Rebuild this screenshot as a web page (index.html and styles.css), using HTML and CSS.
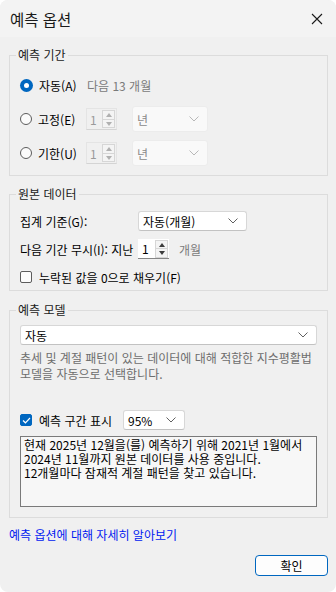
FILE: index.html
```html
<!DOCTYPE html>
<html lang="ko">
<head>
  <meta charset="UTF-8">
  <meta name="viewport" content="width=device-width, initial-scale=1.0">
  <title>예측 옵션</title>
  <link rel="stylesheet" href="styles.css">
</head>
<body>
  <div class="window">
    <div class="titlebar">
      <span class="title">예측 옵션</span>
      <svg class="close" width="12" height="12" viewBox="0 0 12 12"><path d="M1 1 L11 11 M11 1 L1 11" stroke="#1a1a1a" stroke-width="1.1" fill="none"/></svg>
    </div>

    <div class="content">
      <fieldset class="group group-period">
        <legend>예측 기간</legend>
        <div class="row">
          <span class="radio checked"></span>
          <span class="label">자동(A)</span>
          <span class="hint">다음 13 개월</span>
        </div>
        <div class="row">
          <span class="radio"></span>
          <span class="label">고정(E)</span>
          <div class="spin disabled"><span class="num">1</span><span class="arrows"><i class="up"></i><i class="down"></i></span></div>
          <div class="select disabled unit"><span>년</span><svg class="chev" width="10" height="6" viewBox="0 0 10 6"><path d="M0.5 0.5 L5 5 L9.5 0.5" stroke="#b8b8b8" fill="none"/></svg></div>
        </div>
        <div class="row">
          <span class="radio"></span>
          <span class="label">기한(U)</span>
          <div class="spin disabled"><span class="num">1</span><span class="arrows"><i class="up"></i><i class="down"></i></span></div>
          <div class="select disabled unit"><span>년</span><svg class="chev" width="10" height="6" viewBox="0 0 10 6"><path d="M0.5 0.5 L5 5 L9.5 0.5" stroke="#b8b8b8" fill="none"/></svg></div>
        </div>
      </fieldset>

      <fieldset class="group group-source">
        <legend>원본 데이터</legend>
        <div class="row small">
          <span class="field-label">집계 기준(G):</span>
          <div class="select agg"><span>자동(개월)</span><svg class="chev" width="10" height="6" viewBox="0 0 10 6"><path d="M0.5 0.5 L5 5 L9.5 0.5" stroke="#606060" fill="none"/></svg></div>
        </div>
        <div class="row small">
          <span class="field-label">다음 기간 무시(I): 지난</span>
          <div class="spin"><span class="num">1</span><span class="arrows"><i class="up"></i><i class="down"></i></span></div>
          <span class="hint months">개월</span>
        </div>
        <div class="row small">
          <span class="checkbox"></span>
          <span class="check-label">누락된 값을 0으로 채우기(F)</span>
        </div>
      </fieldset>

      <fieldset class="group group-model">
        <legend>예측 모델</legend>
        <div class="select wide"><span>자동</span><svg class="chev" width="10" height="6" viewBox="0 0 10 6"><path d="M0.5 0.5 L5 5 L9.5 0.5" stroke="#606060" fill="none"/></svg></div>
        <p class="desc">추세 및 계절 패턴이 있는 데이터에 대해 적합한 지수평활법<br>모델을 자동으로 선택합니다.</p>
        <div class="row small interval">
          <span class="checkbox checked"><svg width="9" height="7" viewBox="0 0 9 7"><path d="M1 3.5 L3.4 5.8 L8 1" stroke="#fff" stroke-width="1.2" fill="none"/></svg></span>
          <span class="check-label interval-label">예측 구간 표시</span>
          <div class="select pct"><span>95%</span><svg class="chev" width="10" height="6" viewBox="0 0 10 6"><path d="M0.5 0.5 L5 5 L9.5 0.5" stroke="#606060" fill="none"/></svg></div>
        </div>
        <div class="summary">현재 2025년 12월을(를) 예측하기 위해 2021년 1월에서<br>2024년 11월까지 원본 데이터를 사용 중입니다.<br>12개월마다 잠재적 계절 패턴을 찾고 있습니다.</div>
      </fieldset>

      <a class="learn" href="#">예측 옵션에 대해 자세히 알아보기</a>

      <div class="actions">
        <button class="ok">확인</button>
      </div>
    </div>
  </div>
</body>
</html>
```

FILE: styles.css
```css
body {
    margin: 0;
    background-color: #ffffff;
    font-family: "Noto Sans CJK KR", "Noto Sans", sans-serif;
    font-size: 12px;
    color: #000;
}

.window {
    width: 336px;
    height: 592px;
    background-color: #f0f0f0;
    border-radius: 8px;
    overflow: hidden;
}

.titlebar {
    height: 37px;
    background-color: #f3f3f3;
    display: flex;
    align-items: center;
    justify-content: space-between;
    padding: 0 13px 0 10px;
}

.title {
    font-size: 15.5px;
    color: #1a1a1a;
}

.close {
    display: block;
}

.content {
    padding: 10px 8px 0 9px;
}

.group {
    margin: 0;
    border: 1px solid #dcdcdc;
    padding: 9px 10px 9px 10px;
    min-width: 0;
}

.group legend {
    margin-left: -4px;
    padding: 0 2px;
    line-height: 16px;
    color: #1a1a1a;
}

.group-source {
    margin-top: 10px;
    padding-bottom: 3px;
}

.group-model {
    margin-top: 11px;
    padding-top: 7px;
    padding-bottom: 10px;
}

.row {
    display: flex;
    align-items: center;
    height: 26px;
    white-space: nowrap;
}

.row + .row {
    margin-top: 8px;
}

.row.small {
    height: 20px;
}

.radio {
    width: 12px;
    height: 12px;
    border: 1px solid #5c5c5c;
    border-radius: 50%;
    box-sizing: border-box;
    background: #fbfbfb;
    margin-right: 6px;
}

.radio.checked {
    border: none;
    background: #0067c0;
    display: flex;
    align-items: center;
    justify-content: center;
    width: 13px;
    height: 13px;
}

.radio.checked::after {
    content: "";
    width: 5px;
    height: 5px;
    border-radius: 50%;
    background: #fff;
}

.label {
    width: 48px;
}

.hint {
    color: #7a7a7a;
}

.spin {
    display: flex;
    align-items: center;
    width: 31px;
    height: 20px;
    box-sizing: border-box;
    background: #fff;
    border-bottom: 1px solid #868686;
    padding-left: 4px;
}

.spin.disabled {
    background: #f0f0f0;
    border: 1px solid #e4e4e4;
    border-bottom-color: #d4d4d4;
    height: 22px;
    width: 31px;
    padding-left: 3px;
    margin-right: 15px;
}

.spin .num {
    flex: 1;
}

.spin.disabled .num {
    color: #9a9a9a;
}

.arrows {
    display: flex;
    flex-direction: column;
    width: 13px;
    height: 18px;
    margin-right: 1px;
}

.arrows i {
    flex: 1;
    border: 1px solid #d6d6d6;
    background: #f4f4f4;
    position: relative;
}

.arrows i + i {
    border-top: none;
}

.arrows i::after {
    content: "";
    position: absolute;
    left: 3px;
    top: 2px;
    border-left: 3.5px solid transparent;
    border-right: 3.5px solid transparent;
}

.arrows .up::after {
    border-bottom: 4px solid #3c3c3c;
}

.arrows .down::after {
    border-top: 4px solid #3c3c3c;
}

.spin.disabled .arrows i::after {
    border-bottom-color: #b0b0b0;
    border-top-color: #b0b0b0;
}

.select {
    display: flex;
    align-items: center;
    justify-content: space-between;
    height: 20px;
    box-sizing: border-box;
    background: #fff;
    border: 1px solid #d7d7d7;
    border-bottom-color: #c2c2c2;
    border-radius: 3px;
    padding: 0 8px 0 4px;
}

.select.disabled {
    background: #f9f9f9;
    border-color: #ececec;
    color: #8a8a8a;
    height: 26px;
}

.unit {
    width: 76px;
}

.agg {
    width: 109px;
}

.field-label {
    width: 118px;
}

.months {
    margin-left: 10px;
}

.checkbox {
    width: 12px;
    height: 12px;
    box-sizing: border-box;
    border: 1px solid #5c5c5c;
    border-radius: 2px;
    background: #fbfbfb;
    margin-right: 7px;
}

.checkbox.checked {
    background: #0067c0;
    border-color: #0067c0;
    display: flex;
    align-items: center;
    justify-content: center;
}

.wide {
    width: 100%;
}

.desc {
    margin: 5px 0 0 0;
    line-height: 16px;
    color: #6d6d6d;
}

.interval {
    margin-top: 28px;
}

.interval-label {
    width: 84px;
}

.pct {
    width: 62px;
}

.summary {
    margin-top: 6px;
    height: 71px;
    box-sizing: border-box;
    border: 1px solid #7a7a7a;
    background: #f7f7f7;
    padding: 1px 3px;
    line-height: 14px;
}

.learn {
    display: block;
    margin-top: 9px;
    line-height: 16px;
    color: #0019f0;
    text-decoration: none;
}

.actions {
    display: flex;
    justify-content: flex-end;
    margin-top: 12px;
}

.ok {
    width: 73px;
    height: 21px;
    font-family: inherit;
    font-size: 12px;
    background: #fdfdfd;
    border: 1px solid #0067c0;
    border-radius: 4px;
    padding: 0;
    color: #000;
}
```
